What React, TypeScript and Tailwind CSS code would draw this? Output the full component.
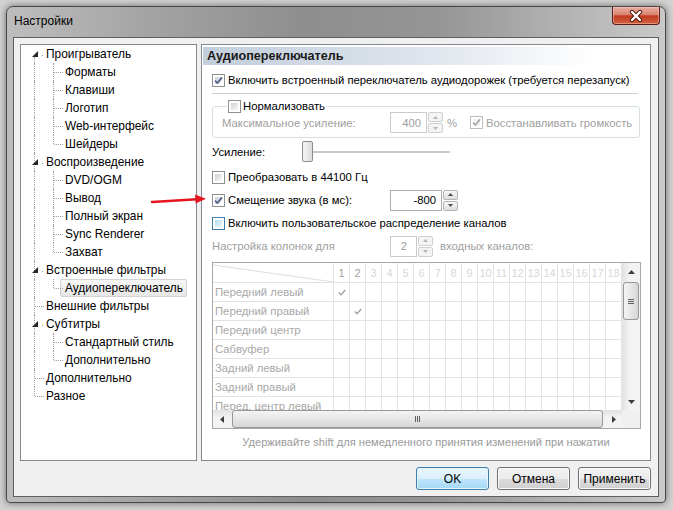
import React from "react";

type TreeNode = { label: string; children?: string[] };

const TREE: TreeNode[] = [
  { label: "Проигрыватель", children: ["Форматы", "Клавиши", "Логотип", "Web-интерфейс", "Шейдеры"] },
  { label: "Воспроизведение", children: ["DVD/OGM", "Вывод", "Полный экран", "Sync Renderer", "Захват"] },
  { label: "Встроенные фильтры", children: ["Аудиопереключатель"] },
  { label: "Внешние фильтры" },
  { label: "Субтитры", children: ["Стандартный стиль", "Дополнительно"] },
  { label: "Дополнительно" },
  { label: "Разное" },
];

const SELECTED = "Аудиопереключатель";

const COLS = Array.from({ length: 18 }, (_, i) => i + 1);
const CHANNELS = [
  "Передний левый",
  "Передний правый",
  "Передний центр",
  "Сабвуфер",
  "Задний левый",
  "Задний правый",
  "Перед. центр левый",
];

function Dots({ className }: { className: string }) {
  return <span className={`absolute border-dotted border-[#a0a0a0] ${className}`} />;
}

function TreeRow({
  label,
  level,
  expander,
  first,
  last,
  childLast,
}: {
  label: string;
  level: 0 | 1;
  expander?: boolean;
  first?: boolean;
  last?: boolean;
  childLast?: boolean;
}) {
  const selected = level === 1 && label === SELECTED;
  const rootLine = first ? "top-[12px] bottom-0" : last ? "top-0 h-[9px]" : "inset-y-0";
  return (
    <div className="flex h-[18px] items-center">
      <div className="relative h-full w-[20px] shrink-0">
        <Dots className={`left-[13px] w-0 border-l ${rootLine}`} />
        {level === 0 &&
          (expander ? (
            <>
              <svg className="absolute left-[11px] top-[6px]" width="6" height="6" viewBox="0 0 6 6">
                <path d="M6 0 L6 6 L0 6 Z" fill="#262626" />
              </svg>
              <Dots className="left-[21px] top-[10px] h-0 w-px border-t" />
            </>
          ) : (
            <Dots className="left-[14px] top-[9px] h-0 w-[9px] border-t" />
          ))}
      </div>
      {level === 1 && (
        <div className="relative h-full w-[19px] shrink-0">
          <Dots className={`left-[12px] w-0 border-l ${childLast ? "top-0 h-[9px]" : "inset-y-0"}`} />
          <Dots className="left-[13px] top-[9px] h-0 w-[9px] border-t" />
        </div>
      )}
      <span
        className={`flex h-[18px] items-center rounded-[2px] border pl-[4px] pr-[3px] ${
          selected
            ? "border-[#d3d3d3] bg-[linear-gradient(#f8f8f8,#e6e6e6)]"
            : "border-transparent"
        }`}
      >
        {label}
      </span>
    </div>
  );
}

function Tree() {
  const rows: React.ReactNode[] = [];
  TREE.forEach((node, i) => {
    rows.push(
      <TreeRow
        key={`r${i}`}
        label={node.label}
        level={0}
        expander={!!node.children}
        first={i === 0}
        last={i === TREE.length - 1}
      />
    );
    node.children?.forEach((c, j) =>
      rows.push(
        <TreeRow key={`r${i}c${j}`} label={c} level={1} childLast={j === node.children!.length - 1} />
      )
    );
  });
  return (
    <div className="h-[417px] w-[177px] shrink-0 border border-[#828790] bg-white text-[11.9px] leading-[14px]">
      {rows}
    </div>
  );
}

function Check({
  checked = false,
  hover = false,
  disabled = false,
}: {
  checked?: boolean;
  hover?: boolean;
  disabled?: boolean;
}) {
  const border = disabled ? "border-[#bcbcbc]" : hover ? "border-[#3c7fb1]" : "border-[#8e8f8f]";
  const fill = disabled
    ? "bg-[#f4f4f4]"
    : hover
    ? "bg-[linear-gradient(135deg,#b4def6,#e9f7fd)]"
    : "bg-[linear-gradient(135deg,#cfd1d4,#f7f7f7)]";
  return (
    <span className={`relative flex size-[13px] shrink-0 border bg-white p-[2px] ${border}`}>
      <span className={`size-full ${fill}`} />
      {checked && (
        <svg className="absolute left-0 top-0" width="11" height="11" viewBox="0 0 11 11">
          <path
            d="M2 5.6 L4.4 8 L9 2.4"
            fill="none"
            stroke={disabled ? "#a8a8a8" : "#4a5f8a"}
            strokeWidth="1.7"
          />
        </svg>
      )}
    </span>
  );
}

function SpinHalf({ up, disabled }: { up?: boolean; disabled?: boolean }) {
  return (
    <div
      className={`flex h-[10px] items-center justify-center rounded-[2px] border ${
        disabled ? "border-[#d0d0d0] bg-[#f4f4f4]" : "border-[#b4b4b4] bg-[linear-gradient(#f6f6f6,#dedede)]"
      }`}
    >
      <svg width="5" height="3" viewBox="0 0 5 3">
        <path d={up ? "M0 3 L2.5 0 L5 3 Z" : "M0 0 L5 0 L2.5 3 Z"} fill={disabled ? "#b6b6b6" : "#4a4a4a"} />
      </svg>
    </div>
  );
}

function Spin({ value, edit, disabled }: { value: string; edit: string; disabled?: boolean }) {
  return (
    <div className="flex h-[21px] shrink-0">
      <div
        className={`flex h-full items-center justify-end border bg-white ${edit} ${
          disabled ? "border-[#c9cbd0] text-[#a0a0a0]" : "border-[#abadb3]"
        }`}
      >
        {value}
      </div>
      <div className="flex w-[16px] flex-col justify-center gap-px pl-px">
        <SpinHalf up disabled={disabled} />
        <SpinHalf disabled={disabled} />
      </div>
    </div>
  );
}

function Tri({ dir }: { dir: "up" | "down" | "left" | "right" }) {
  const v = dir === "up" || dir === "down";
  const d = {
    up: "M0 4 L3.5 0 L7 4 Z",
    down: "M0 0 L7 0 L3.5 4 Z",
    left: "M4 0 L4 7 L0 3.5 Z",
    right: "M0 0 L4 3.5 L0 7 Z",
  }[dir];
  return (
    <svg width={v ? 7 : 4} height={v ? 4 : 7} viewBox={v ? "0 0 7 4" : "0 0 4 7"}>
      <path d={d} fill="#3c3c3c" />
    </svg>
  );
}

function Tick() {
  return (
    <svg width="8" height="7" viewBox="0 0 8 7">
      <path d="M0.8 3.6 L3 5.8 L7.2 1" fill="none" stroke="#a4a4a4" strokeWidth="1.4" />
    </svg>
  );
}

function ChannelGrid() {
  return (
    <div className="flex w-[429px] flex-col border border-[#a8a8a8]">
      <div className="flex">
        <div className="h-[147px] w-[409px] overflow-hidden bg-white">
          <div className="flex h-[20px] border-b border-[#e3e3e3]">
            <div className="relative w-[121px] shrink-0 border-r border-[#e3e3e3]">
              <svg className="absolute left-0 top-0" width="121" height="19" viewBox="0 0 121 19">
                <line x1="0" y1="2" x2="121" y2="19" stroke="#dedede" />
              </svg>
            </div>
            {COLS.map((c) => (
              <div
                key={c}
                className={`flex w-[16px] shrink-0 items-center justify-center border-r border-[#e3e3e3] text-[11px] ${
                  c <= 2 ? "text-[#a0a0a0]" : "text-[#d8d8d8]"
                }`}
              >
                {c}
              </div>
            ))}
          </div>
          {CHANNELS.map((name, ri) => (
            <div key={name} className="flex h-[19px] border-b border-[#e3e3e3]">
              <div className="flex w-[121px] shrink-0 items-center whitespace-nowrap border-r border-[#e3e3e3] pl-[2px] text-[#a8a8a8]">
                {name}
              </div>
              {COLS.map((c) => (
                <div key={c} className="flex w-[16px] shrink-0 items-center justify-center border-r border-[#e3e3e3]">
                  {ri < 2 && c === ri + 1 ? <Tick /> : null}
                </div>
              ))}
            </div>
          ))}
        </div>
        <div className="flex h-[147px] w-[18px] flex-col bg-[linear-gradient(to_right,#e2e2e2,#f3f3f3_45%,#f3f3f3)]">
          <div className="flex h-[17px] items-center justify-center">
            <Tri dir="up" />
          </div>
          <div className="flex-1 px-px pt-[2px]">
            <div className="flex h-[38px] items-center justify-center rounded-[3px] border border-[#979797] bg-[linear-gradient(to_right,#f4f4f4,#e6e6e6_50%,#d6d6d6)]">
              <div className="flex flex-col gap-px">
                <span className="h-px w-[6px] bg-[#606060]" />
                <span className="h-px w-[6px] bg-[#606060]" />
                <span className="h-px w-[6px] bg-[#606060]" />
              </div>
            </div>
          </div>
          <div className="flex h-[17px] items-center justify-center">
            <Tri dir="down" />
          </div>
        </div>
      </div>
      <div className="flex">
        <div className="flex h-[18px] w-[409px] bg-[linear-gradient(#e2e2e2,#f3f3f3_45%,#f3f3f3)]">
          <div className="flex w-[17px] items-center justify-center">
            <Tri dir="left" />
          </div>
          <div className="ml-[2px] flex w-[371px] items-center justify-center rounded-[3px] border border-[#979797] bg-[linear-gradient(#f4f4f4,#e6e6e6_50%,#d6d6d6)] py-px">
            <div className="flex gap-px">
              <span className="h-[6px] w-px bg-[#606060]" />
              <span className="h-[6px] w-px bg-[#606060]" />
              <span className="h-[6px] w-px bg-[#606060]" />
            </div>
          </div>
          <div className="ml-[2px] flex w-[17px] items-center justify-center">
            <Tri dir="right" />
          </div>
        </div>
        <div className="size-[18px] bg-[#f0f0f0]" />
      </div>
    </div>
  );
}

function AudioSwitcherPage() {
  return (
    <div className="flex h-[417px] w-[450px] flex-col border border-[#828790] bg-white text-[11.3px] leading-[14px]">
      <div className="mx-px mt-[2px] flex h-[18px] items-center bg-[linear-gradient(to_right,#c3cedc,#dbe2eb_45%,#ffffff_88%)] pl-[4px] text-[12.6px] font-bold text-[#1a1a1a]">
        Аудиопереключатель
      </div>
      <div className="flex flex-col pl-[10px]">
        <div className="mt-[6px] flex h-[18px] items-center gap-[3px]">
          <Check checked />
          <span>Включить встроенный переключатель аудиодорожек (требуется перезапуск)</span>
        </div>
        <div className="mt-[4px] h-px w-[426px] bg-[#cfcfcf]" />
        <div className="relative mt-[12px] flex h-[32px] w-[428px] items-center rounded-[3px] border border-[#d5dfe5] pt-px">
          <div className="absolute -top-[8px] left-[14px] flex items-center gap-[2px] bg-white px-px">
            <Check />
            <span>Нормализовать</span>
          </div>
          <span className="w-[177px] shrink-0 pl-[9px] text-[#a0a0a0]">Максимальное усиление:</span>
          <Spin value="400" edit="w-[37px] pr-[5px]" disabled />
          <span className="w-[27px] shrink-0 pl-[4px] text-[#a0a0a0]">%</span>
          <Check checked disabled />
          <span className="ml-[3px] text-[#a0a0a0]">Восстанавливать громкость</span>
        </div>
        <div className="mt-[3px] flex h-[22px] items-center">
          <span className="w-[90px] shrink-0">Усиление:</span>
          <div className="relative h-[22px] w-[148px]">
            <div className="absolute left-[3px] right-0 top-[10px] h-[2px] bg-[#c8c8c8]" />
            <div className="absolute left-0 top-0 h-[21px] w-[11px] rounded-[2px] border border-[#8c8c8c] bg-[linear-gradient(to_right,#f5f5f5,#dcdcdc)]" />
          </div>
        </div>
        <div className="mt-[5px] flex h-[18px] items-center gap-[3px]">
          <Check />
          <span>Преобразовать в 44100 Гц</span>
        </div>
        <div className="mt-[3px] flex h-[22px] items-center">
          <div className="flex w-[178px] shrink-0 items-center gap-[3px]">
            <Check checked />
            <span>Смещение звука (в мс):</span>
          </div>
          <Spin value="-800" edit="w-[52px] pr-[5px]" />
        </div>
        <div className="mt-[3px] flex h-[18px] items-center gap-[3px]">
          <Check hover />
          <span>Включить пользовательское распределение каналов</span>
        </div>
        <div className="mt-[4px] flex h-[20px] items-center text-[#a0a0a0]">
          <span className="w-[178px] shrink-0">Настройка колонок для</span>
          <Spin value="2" edit="w-[27px] pr-[9px]" disabled />
          <span className="ml-[7px]">входных каналов:</span>
        </div>
        <div className="mt-[6px]">
          <ChannelGrid />
        </div>
      </div>
      <div className="mt-[6px] flex h-[14px] items-center justify-center text-[11.1px] text-[#9a9a9a]">
        Удерживайте shift для немедленного принятия изменений при нажатии
      </div>
    </div>
  );
}

function DialogButton({ label, primary }: { label: string; primary?: boolean }) {
  return (
    <div
      className={`flex h-[23px] w-[73px] items-center justify-center rounded-[3px] border text-[12px] ${
        primary
          ? "border-[#3c7fb1] bg-[linear-gradient(#eaf6fd,#d9f0fc_50%,#bee6fd_50%,#a7d9f5)] shadow-[inset_0_0_0_1px_#e6f4fc]"
          : "border-[#707070] bg-[linear-gradient(#f2f2f2,#ebebeb_50%,#dddddd_50%,#cfcfcf)] shadow-[inset_0_0_0_1px_#fbfbfb]"
      }`}
    >
      {label}
    </div>
  );
}

function CloseButton() {
  return (
    <div className="mr-[5px] flex h-[18px] w-[48px] items-center justify-center rounded-b-[4px] border border-t-0 border-[#5a1c12] bg-[linear-gradient(#e9b0a2,#d8836f_45%,#c23b22_52%,#d0603f)] shadow-[inset_0_0_0_1px_rgba(255,210,200,0.45)]">
      <svg width="14" height="12" viewBox="0 0 14 12">
        <path d="M3 2 L11 10 M11 2 L3 10" stroke="#4a140c" strokeWidth="4.2" strokeLinecap="round" />
        <path d="M3 2 L11 10 M11 2 L3 10" stroke="#ffffff" strokeWidth="2.4" strokeLinecap="round" />
      </svg>
    </div>
  );
}

export default function App() {
  return (
    <div className="relative h-[510px] w-[673px] overflow-hidden bg-[#d2d2d2] pl-[6px] pt-[6px] font-['Liberation_Sans',Arial,sans-serif] text-black">
      <div className="flex h-[497px] w-[660px] flex-col rounded-t-[7px] rounded-b-[4px] border border-[#474747] bg-[linear-gradient(to_right,#bdbdbd,#a3a3a3_22%,#8e8e8e_45%,#959595_65%,#c9c9c9)] shadow-[0_0_7px_rgba(0,0,0,0.5)]">
        <div className="flex h-[30px] shrink-0 items-start justify-between">
          <span className="ml-[7px] mt-[7px] text-[12px] leading-[14px]">Настройки</span>
          <CloseButton />
        </div>
        <div className="mx-[6px] flex h-[460px] shrink-0 flex-col border border-[#5f5f5f] bg-[#f0f0f0] px-[6px] pt-[6px]">
          <div className="flex gap-[4px]">
            <Tree />
            <AudioSwitcherPage />
          </div>
          <div className="mt-[6px] flex justify-end gap-[8px] pr-[1px]">
            <DialogButton label="OK" primary />
            <DialogButton label="Отмена" />
            <DialogButton label="Применить" />
          </div>
        </div>
      </div>
      <svg className="absolute left-[150px] top-[192px]" width="60" height="14" viewBox="0 0 60 14">
        <path d="M2 10 L47 7.3" stroke="#e3161d" strokeWidth="2.4" strokeLinecap="round" />
        <path d="M56 6.8 L45 2.6 L45.6 11.6 Z" fill="#e3161d" />
      </svg>
    </div>
  );
}
